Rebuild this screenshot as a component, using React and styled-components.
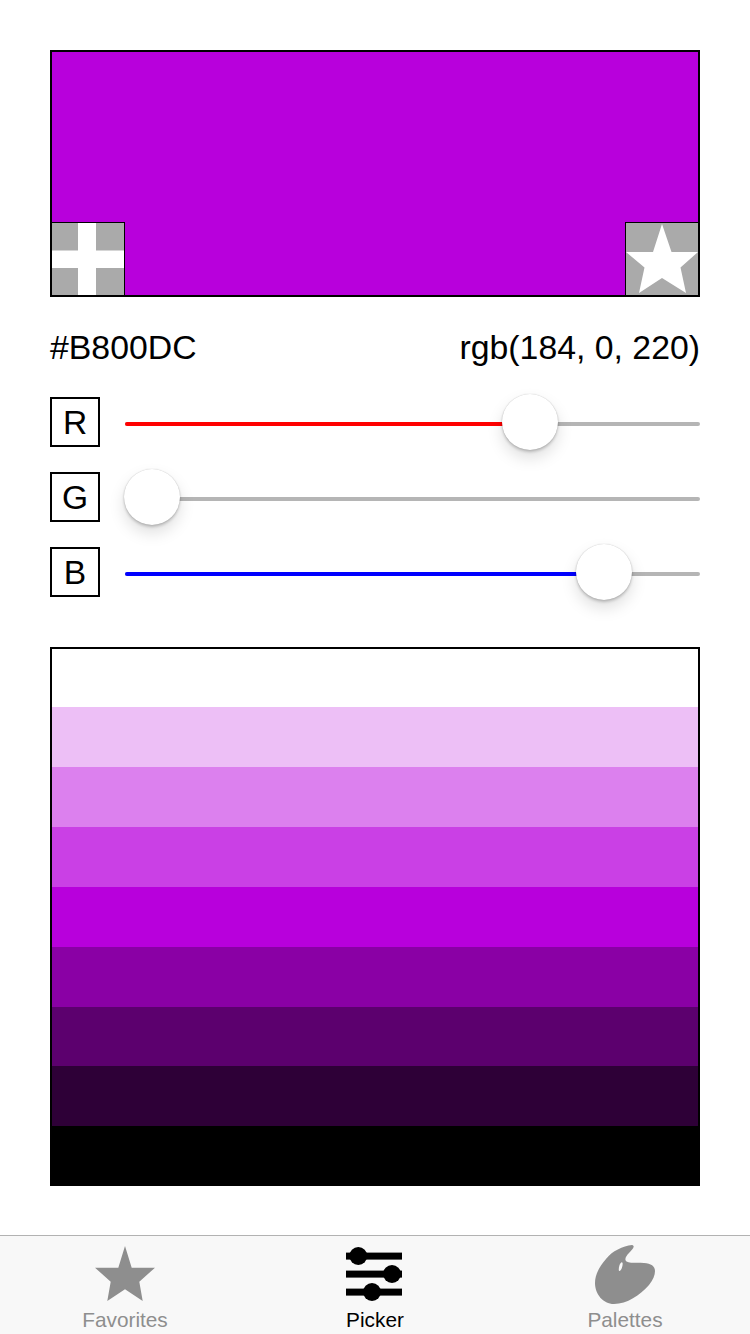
import React from "react";
import styled, { createGlobalStyle } from "styled-components";

const Global = createGlobalStyle`
  html, body { margin: 0; padding: 0; background: #fff; }
  body { font-family: "Liberation Sans", Arial, sans-serif; color: #000; }
  * { box-sizing: border-box; }
`;

const Page = styled.div`
  width: 750px;
  height: 1334px;
  display: flex;
  flex-direction: column;
  overflow: hidden;
`;
const Content = styled.main`
  flex: 1;
  padding: 50px 50px 0;
  display: flex;
  flex-direction: column;
`;
const Preview = styled.section`
  height: 247px;
  border: 2px solid #000;
  background: ${(p) => p.$color};
  display: flex;
  justify-content: space-between;
  align-items: flex-end;
`;
const CornerButton = styled.button`
  width: 73px;
  height: 73px;
  padding: 0;
  border: 0 solid #000;
  border-top-width: 1px;
  border-${(p) => p.$side}-width: 1px;
  background: #aaa;
  display: block;
`;
const CornerIcon = styled.svg`
  display: block;
  width: 72px;
  height: 72px;
  fill: #fff;
`;
const Readout = styled.div`
  margin-top: 30px;
  height: 40px;
  display: flex;
  justify-content: space-between;
  align-items: center;
  font-size: 33.8px;
  line-height: 40px;
`;
const Sliders = styled.div`
  margin-top: 30px;
  display: flex;
  flex-direction: column;
  gap: 25px;
`;
const SliderRow = styled.div`
  height: 50px;
  display: flex;
  align-items: center;
  gap: 25px;
`;
const ChannelLabel = styled.div`
  width: 50px;
  height: 50px;
  border: 2px solid #000;
  padding-top: 1px;
  display: flex;
  align-items: center;
  justify-content: center;
  font-size: 33.6px;
`;
const Track = styled.div`
  position: relative;
  flex: 1;
  height: 4px;
  margin-top: 4px;
  border-radius: 2px;
  background: #b5b5b5;
`;
const TrackFill = styled.div`
  height: 100%;
  border-radius: 2px 0 0 2px;
  background: ${(p) => p.$color};
`;
const Thumb = styled.div`
  position: absolute;
  top: -28.5px;
  width: 56px;
  height: 56px;
  border-radius: 50%;
  background: #fff;
  box-shadow: 0 0 1px rgba(0, 0, 0, 0.25), 0 2px 3px rgba(0, 0, 0, 0.2), 0 8px 16px rgba(0, 0, 0, 0.13);
`;
const Shades = styled.section`
  position: relative;
  margin-top: 50.3px;
  height: 538.9px;
  display: flex;
  flex-direction: column;
  &::after {
    content: "";
    position: absolute;
    inset: 0;
    border: 2px solid #000;
    border-bottom: 0;
  }
`;
const Shade = styled.div`
  flex: 1;
  background: ${(p) => p.$color};
`;
const TabBar = styled.nav`
  height: 99px;
  border-top: 1px solid #b2b2b2;
  background: #f8f8f8;
  display: flex;
`;
const Tab = styled.div`
  width: 250px;
  display: flex;
  flex-direction: column;
  align-items: center;
  padding-top: 8px;
  color: ${(p) => (p.$active ? "#000" : "#8e8e8e")};
`;
const TabIcon = styled.svg`
  display: block;
  width: 60px;
  height: 60px;
  fill: currentColor;
  flex: none;
`;
const TabLabel = styled.span`
  font-size: 20.8px;
  line-height: 24px;
  margin-top: 4px;
`;

const CHANNELS = [
  { label: "R", value: 184, color: "#ff0000" },
  { label: "G", value: 0, color: "#00ff00" },
  { label: "B", value: 220, color: "#0000ff" },
];
const base = [184, 0, 220];
const mix = (t, f) => `rgb(${base.map((c) => Math.round(c * f + t * (1 - f))).join(",")})`;
const SHADES = [
  "#fff",
  mix(255, 0.25),
  mix(255, 0.5),
  mix(255, 0.75),
  mix(255, 1),
  mix(0, 0.75),
  mix(0, 0.5),
  mix(0, 0.25),
  "#000",
];
const STAR = "36,1 45.5,29 72,29 54.5,44.5 60,70 36,55 13,70 18.5,44.5 0,29 27,29";
const TAB_STAR = "30,2 36.7,23.7 60,23.7 44.3,37.7 47.7,57 30,45.3 12.3,57 15.7,37.7 0,23.7 23.3,23.7";

export default function App() {
  return (
    <Page>
      <Global />
      <Content>
        <Preview $color="#b800dc">
          <CornerButton $side="right" aria-label="Add">
            <CornerIcon viewBox="0 0 72 72">
              <path d="M26 0h18v27.5h28v17.5H44v27H26V45H0V27.5h26z" />
            </CornerIcon>
          </CornerButton>
          <CornerButton $side="left" aria-label="Favorite">
            <CornerIcon viewBox="0 0 72 72">
              <polygon points={STAR} />
            </CornerIcon>
          </CornerButton>
        </Preview>
        <Readout>
          <span>#B800DC</span>
          <span>rgb(184, 0, 220)</span>
        </Readout>
        <Sliders>
          {CHANNELS.map((c) => {
            const left = (c.value / 255) * 524 - 1;
            return (
              <SliderRow key={c.label}>
                <ChannelLabel>{c.label}</ChannelLabel>
                <Track>
                  <TrackFill $color={c.color} style={{ width: left + 2 }} />
                  <Thumb style={{ left }} />
                </Track>
              </SliderRow>
            );
          })}
        </Sliders>
        <Shades>
          {SHADES.map((s, i) => (
            <Shade key={i} $color={s} />
          ))}
        </Shades>
      </Content>
      <TabBar>
        <Tab>
          <TabIcon viewBox="0 0 60 60">
            <polygon points={TAB_STAR} />
          </TabIcon>
          <TabLabel>Favorites</TabLabel>
        </Tab>
        <Tab $active>
          <TabIcon viewBox="0 0 60 60">
            <rect x="1" y="8.6" width="56" height="7" />
            <rect x="1" y="26.6" width="56" height="7" />
            <rect x="1" y="44.6" width="56" height="7" />
            <circle cx="13.3" cy="12" r="9" />
            <circle cx="47" cy="30" r="9" />
            <circle cx="27" cy="48" r="9" />
          </TabIcon>
          <TabLabel>Picker</TabLabel>
        </Tab>
        <Tab>
          <TabIcon viewBox="0 0 60 60">
            <path
              fillRule="evenodd"
              d="M37 1C28 2 17 7 11 15C4 23 0 31 0 39C0 50 8 60 19 60C32 60 45 51 54 41C58 36 60 31 60 27C60 22 56 19.5 49 19C42 18.5 35 19.5 31.5 17.5C29 15.5 31 12 34 9C37 6 41 2 37 1ZM27.2 18.4C26.4 18 25 19.4 24.4 21.5C23.7 24 23.5 26.6 24.2 27C25 27.3 26.3 25.9 27 23.5C27.7 21 28 18.8 27.2 18.4Z"
            />
          </TabIcon>
          <TabLabel>Palettes</TabLabel>
        </Tab>
      </TabBar>
    </Page>
  );
}
